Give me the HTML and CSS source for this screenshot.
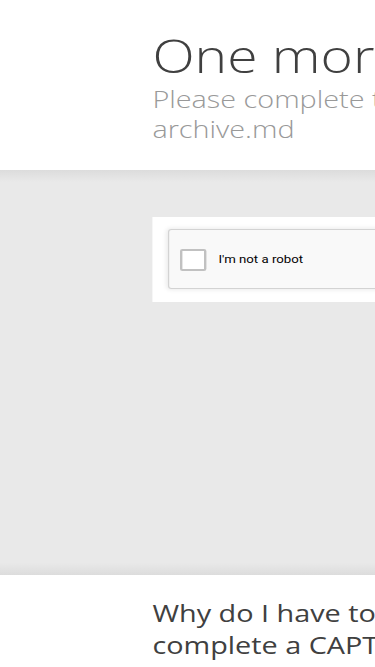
FILE: index.html
```html
<html>

<head>
    <meta name="viewport" content="width=device-width, initial-scale=1">
    <link rel="stylesheet" href="styles.css">
</head>

<body>
    <div id="page">
        <div class="header">
            <div class="wrapper">
                <h1 class="title">One more step</h1>
                <h2 class="subtitle">Please complete the security check to access archive.md</h2>
            </div>
        </div>

        <div class="highlight">
            <div class="wrapper">
                <div class="captchaCard">
                    <div class="recaptcha">
                        <div class="checkbox"></div>
                        <span class="robotLabel">I'm not a robot</span>
                        <div class="recaptchaLogo">
                            <svg width="32" height="32" viewBox="0 0 32 32">
                                <circle cx="16" cy="16" r="11" fill="none" stroke="#4a90e2" stroke-width="4" />
                            </svg>
                            <span>reCAPTCHA</span>
                        </div>
                    </div>
                </div>
            </div>
        </div>

        <div class="info">
            <div class="wrapper columns">
                <div class="column">
                    <h2 class="infoTitle">Why do I have to complete a CAPTCHA?</h2>
                </div>
                <div class="column">
                    <h2 class="infoTitle">What can I do to prevent this in the future?</h2>
                </div>
            </div>
        </div>
    </div>
</body>

</html>
```

FILE: styles.css
```css
    html,
    body {
        margin: 0;
        padding: 0;
        overflow-x: hidden;
        background: #ffffff;
        font-family: "Open Sans", "Liberation Sans", sans-serif;
    }

    /* the capture is stretched sideways, so is the page */
    #page {
        transform: scaleX(1.2);
        transform-origin: 0 0;
    }

    .wrapper {
        width: 540px;
        padding-left: 127px;
    }

    .header {
        padding-top: 28px;
        padding-bottom: 26px;
    }

    .title {
        margin: 0;
        font-size: 46px;
        line-height: 54px;
        font-weight: 300;
        color: #404040;
        white-space: nowrap;
    }

    .subtitle {
        margin: 2px 0 0 0;
        font-size: 24px;
        line-height: 30px;
        font-weight: 300;
        color: #999999;
    }

    /* grey band with the captcha */
    .highlight {
        height: 405px;
        box-sizing: border-box;
        padding-top: 47px;
        background: #e9e9e9;
        background-image: linear-gradient(#dcdcdc, #e9e9e9 3%, #e9e9e9 97%, #dcdcdc);
    }

    .captchaCard {
        width: 329px;
        padding: 12px 12.5px 13px 12.5px;
        background: #ffffff;
        box-sizing: border-box;
    }

    .recaptcha {
        display: flex;
        align-items: center;
        width: 304px;
        height: 60px;
        box-sizing: border-box;
        padding-left: 9px;
        background: #f9f9f9;
        border: 1px solid #d3d3d3;
        border-radius: 3px;
        box-shadow: 0 0 4px 1px rgba(0, 0, 0, 0.08);
        font-family: Roboto, "Liberation Sans", sans-serif;
    }

    .checkbox {
        width: 22px;
        height: 22px;
        box-sizing: border-box;
        border: 2px solid #c1c1c1;
        border-radius: 2px;
        background: #ffffff;
        margin-top: 1px;
    }

    .robotLabel {
        margin-left: 10.5px;
        font-size: 11px;
        color: #000000;
    }

    .recaptchaLogo {
        margin-left: auto;
        margin-right: 10px;
        display: flex;
        flex-direction: column;
        align-items: center;
        font-size: 8px;
        color: #555555;
    }

    .info {
        padding-top: 22px;
    }

    .columns {
        display: grid;
        grid-template-columns: 270px 270px;
    }

    .infoTitle {
        margin: 0;
        font-size: 24px;
        line-height: 32px;
        font-weight: 400;
        color: #404040;
    }
```
